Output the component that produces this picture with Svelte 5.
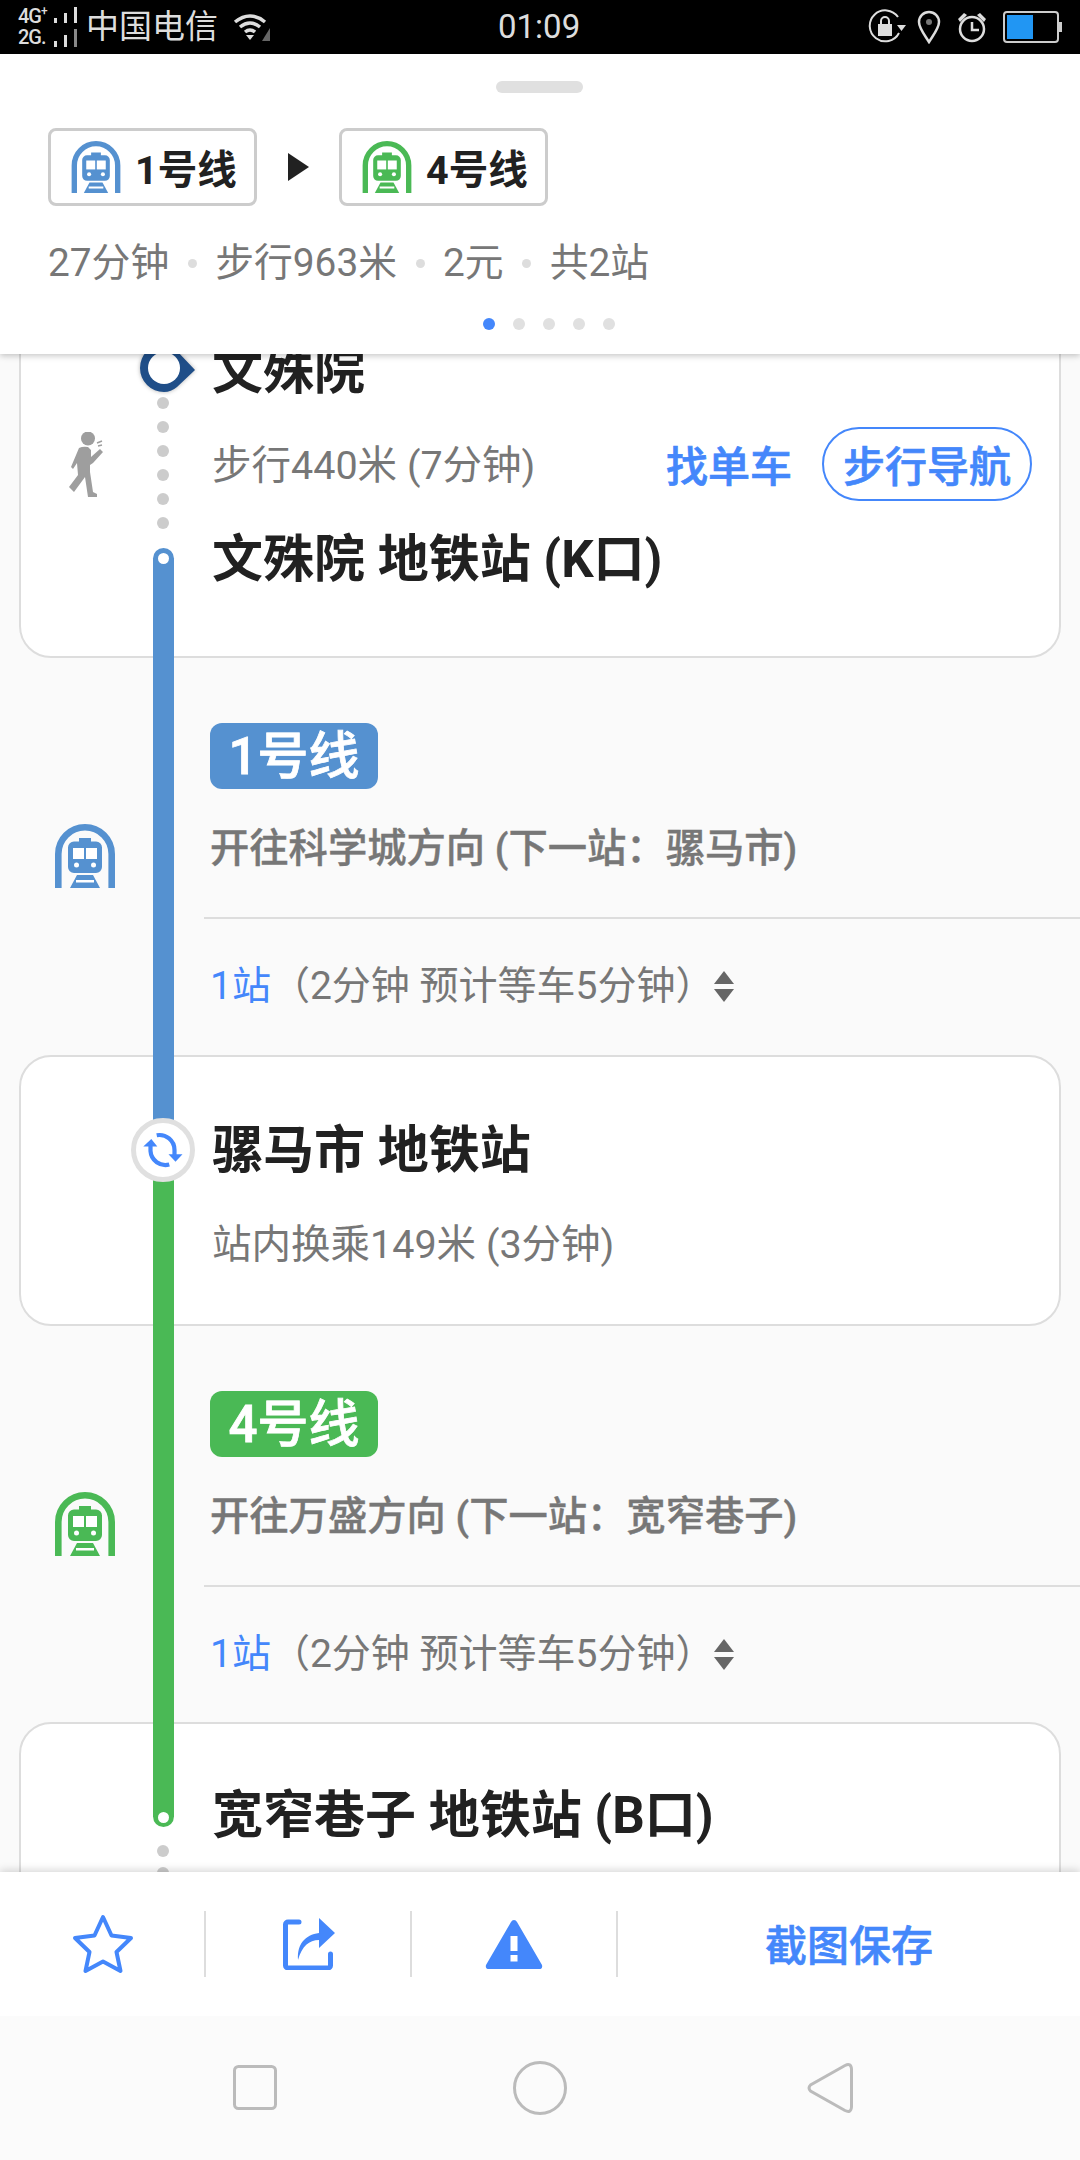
<script lang="ts">
	const metaItems = ['27分钟', '步行963米', '2元', '共2站'];
	const pageDots = [0, 1, 2, 3, 4];
	const blue = '#5591d0';
	const green = '#4ab955';
	const sections = [
		{ name: '1号线', color: blue, direction: '开往科学城方向 (下一站：骡马市)' },
		{ name: '4号线', color: green, direction: '开往万盛方向 (下一站：宽窄巷子)' }
	];
</script>

{#snippet train(color: string, cls: string)}
	<svg class={cls} viewBox="0 0 60 64">
		<path d="M3.3 64V30a26.7 26.7 0 0 1 53.4 0v34" fill="none" stroke={color} stroke-width="6.6" />
		<path
			d="M24 14h12v3.500h5a6 6 0 0 1 6 6V43a6 6 0 0 1-6 6H19a6 6 0 0 1-6-6V23.500a6 6 0 0 1 6-6h5z"
			fill={color}
		/>
		<rect x="18" y="24" width="11" height="11" fill="#fff" />
		<rect x="31" y="24" width="11" height="11" fill="#fff" />
		<circle cx="21.500" cy="41" r="2.500" fill="#fff" />
		<circle cx="38.500" cy="41" r="2.500" fill="#fff" />
		<path d="M22 51h16l7 13H15z" fill={color} />
		<rect x="21" y="56" width="18" height="2.500" fill="#fff" />
	</svg>
{/snippet}

<div class="phone">
	<div class="status">
		<div class="status-left">
			<div class="net"><span>4G<sup>+</sup></span><span>2G.</span></div>
			<svg class="bars" viewBox="0 0 30 44">
				<rect x="0" y="13" width="3" height="5" fill="#ddd" />
				<rect x="10" y="8" width="3" height="10" fill="#ddd" />
				<rect x="20" y="2" width="3" height="16" fill="#ddd" />
				<rect x="0" y="36" width="3" height="6" fill="#ddd" />
				<rect x="10" y="30" width="3" height="12" fill="#ddd" />
				<rect x="20" y="24" width="3" height="18" fill="#888" />
			</svg>
			<span class="carrier">中国电信</span>
			<svg class="wifi" viewBox="0 0 42 30">
				<path d="M3 10q15-12 30 0M8 15q10-8 20 0M13 20q5-4 10 0" fill="none" stroke="#ddd" stroke-width="3.500" />
				<path d="M14 23h8l-4 5z" fill="#ddd" />
				<path d="M38 16v13h-8z" fill="#666" />
			</svg>
		</div>
		<span class="time">01:09</span>
		<div class="status-right">
			<svg class="st-lock" viewBox="0 0 38 36">
				<path d="M31 24A15.500 15.500 0 1 1 30 8" fill="none" stroke="#ddd" stroke-width="2" />
				<path d="M29 16h9l-4.500 6z" fill="#ddd" />
				<rect x="10" y="15" width="14" height="12" fill="#ddd" />
				<path d="M13 15v-3a4 4 0 0 1 8 0v3" fill="none" stroke="#ddd" stroke-width="2" />
			</svg>
			<svg class="st-pin" viewBox="0 0 24 34">
				<path d="M12 32C7 24 2 18 2 12a10 10 0 0 1 20 0c0 6-5 12-10 20z" fill="none" stroke="#ddd" stroke-width="2.500" />
				<circle cx="12" cy="12" r="3" fill="#777" />
			</svg>
			<svg class="st-alarm" viewBox="0 0 30 32">
				<circle cx="15" cy="18" r="12" fill="none" stroke="#ddd" stroke-width="2.500" />
				<path d="M15 11v8h7" fill="none" stroke="#ddd" stroke-width="2.500" />
				<path d="M1 8l6-6 3 2-7 7zM29 8l-6-6-3 2 7 7z" fill="#ddd" />
			</svg>
			<div class="battery"><div class="battery-fill"></div></div>
			<div class="battery-tip"></div>
		</div>
	</div>

	<div class="top-panel">
		<div class="handle"></div>
		<div class="route">
			<div class="chip">
				{@render train(blue, 'chip-icon')}
				<span>1号线</span>
			</div>
			<div class="route-arrow"></div>
			<div class="chip">
				{@render train(green, 'chip-icon')}
				<span>4号线</span>
			</div>
		</div>
		<div class="meta">
			{#each metaItems as item, i}
				{#if i > 0}<i class="meta-dot"></i>{/if}
				<span>{item}</span>
			{/each}
		</div>
		<div class="pager">
			{#each pageDots as d}
				<i class="pager-dot" class:active={d === 0}></i>
			{/each}
		</div>
	</div>

	<div class="scroll">
		<div class="card card-first">
			<div class="title">文殊院</div>
			<div class="walk-row">
				<span class="sub">步行440米 (7分钟)</span>
				<div class="actions">
					<span class="bike">找单车</span>
					<span class="nav-pill">步行导航</span>
				</div>
			</div>
			<div class="title title-end">文殊院 地铁站 (K口)</div>
		</div>

		{#each sections as s, i}
			<div class="section">
				<div class="section-icon">
					{@render train(s.color, 'section-train')}
				</div>
				<div class="section-body">
					<div class="line-badge" style:background={s.color}>{s.name}</div>
					<div class="direction">{s.direction}</div>
					<div class="divider"></div>
					<div class="stops">
						<span class="stops-count">1站</span><span class="stops-info">（2分钟 预计等车5分钟）</span>
						<span class="sort"><i class="sort-up"></i><i class="sort-down"></i></span>
					</div>
				</div>
			</div>
			{#if i === 0}
				<div class="card card-transfer">
					<div class="title">骡马市 地铁站</div>
					<div class="sub transfer-sub">站内换乘149米 (3分钟)</div>
				</div>
			{/if}
		{/each}

		<div class="card card-last">
			<div class="title">宽窄巷子 地铁站 (B口)</div>
		</div>

		<!-- route rail sits over the cards -->
		<div class="dots dots-walk">
			{#each [0, 1, 2, 3, 4, 5] as d}<i data-d={d}></i>{/each}
		</div>
		<div class="dots dots-end">
			{#each [0, 1] as d}<i data-d={d}></i>{/each}
		</div>
		<div class="rail rail-blue"><i></i></div>
		<div class="rail rail-green"><i></i></div>

		<svg class="start-node" viewBox="0 0 60 60">
			<path d="M25 1A24 24 0 1 0 25 49Q32 49 38 44L56 27L38 8Q32 1 25 1Z" fill="#1f4e88" />
			<circle cx="25" cy="25" r="16" fill="#fff" />
		</svg>

		<div class="transfer-node">
			<svg viewBox="0 0 44 44">
				<path d="M15.700 7.300A15 15 0 0 1 33.500 22v5" fill="none" stroke="#4487fb" stroke-width="4.200" />
				<path d="M27.500 26.300h14l-7 7.500z" fill="#4487fb" />
				<path d="M28.300 36.500A15 15 0 0 1 9.500 23v-5" fill="none" stroke="#4487fb" stroke-width="4.200" />
				<path d="M2.300 18.600h14l-6-7.500z" fill="#4487fb" />
			</svg>
		</div>

		<svg class="walker" viewBox="0 0 36 66">
			<circle cx="20" cy="6.500" r="7" fill="#9e9e9e" />
			<path
				d="M11 16q4-2 9-1l3 3v7l9-8 3 3-10 11-3 2v7l3 20 4 2v3h-9l-3-20-11 15-5-5 9-12-1-12-4 6-2-2z"
				fill="#9e9e9e"
			/>
			<path d="M29 11l5-2M30 14l4-1" stroke="#9e9e9e" stroke-width="1.500" />
		</svg>
	</div>

	<div class="toolbar">
		<div class="tool tool-icon">
			<svg class="ic-star" viewBox="0 0 62 60">
				<path
					d="M31 3l8.500 18.500 19.500 2.500-14.500 14 4 19-17.500-9.500-17.500 9.500 4-19L3 24l19.500-2.500z"
					fill="none"
					stroke="#4487fb"
					stroke-width="4"
					stroke-linejoin="round"
				/>
			</svg>
		</div>
		<div class="tool tool-icon">
			<svg class="ic-share" viewBox="0 0 52 52">
				<path d="M16 4H5a2.500 2.500 0 0 0-2.500 2.500v41A2.500 2.500 0 0 0 5 50h40a2.500 2.500 0 0 0 2.500-2.500V36" fill="none" stroke="#4487fb" stroke-width="5" stroke-linecap="round" />
				<path d="M15 42C14 26 22 17 36 15V0l16 15-16 15V22C26 22 19 28 15 42z" fill="#4487fb" />
			</svg>
		</div>
		<div class="tool tool-icon">
			<svg class="ic-warn" viewBox="0 0 58 50">
				<path d="M29 1q2 0 3 2l25 43q1 4-3 4H4q-4 0-3-4L26 3q1-2 3-2z" fill="#4487fb" />
				<rect x="25.500" y="17" width="7" height="15" fill="#fff" />
				<rect x="25.500" y="36" width="7" height="6.500" fill="#fff" />
			</svg>
		</div>
		<div class="tool save">截图保存</div>
	</div>

	<div class="navbar">
		<svg class="nav-square" viewBox="0 0 44 45">
			<rect x="1.500" y="1.500" width="41" height="42" rx="4" fill="none" stroke="#bbb" stroke-width="3" />
		</svg>
		<svg class="nav-circle" viewBox="0 0 54 54">
			<circle cx="27" cy="27" r="25.500" fill="none" stroke="#bbb" stroke-width="3" />
		</svg>
		<svg class="nav-back" viewBox="0 0 46 52">
			<path d="M38 3.500Q44 .5 44.500 7v38q-.5 6.500-6.500 3.500L3.500 29q-3-3 0-6z" fill="none" stroke="#bbb" stroke-width="3" />
		</svg>
	</div>
</div>

<style>
	:global(body) {
		margin: 0;
		background: #fafafa;
	}

	.phone {
		width: 1080px;
		height: 2160px;
		display: flex;
		flex-direction: column;
		overflow: hidden;
		font-family: Roboto, 'Noto Sans CJK SC', sans-serif;
		background: #fafafa;
	}

	.phone i {
		display: block;
	}

	/* status bar */
	.status {
		height: 54px;
		flex: none;
		background: #000;
		color: #ddd;
		position: relative;
		display: flex;
		align-items: center;
		justify-content: space-between;
		padding: 0 18px;
		box-sizing: border-box;
	}

	.status-left,
	.status-right {
		display: flex;
		align-items: center;
	}

	.net {
		display: flex;
		flex-direction: column;
		font-size: 20px;
		line-height: 21px;
		width: 36px;
		white-space: nowrap;
		font-weight: 500;
		letter-spacing: -1px;
	}

	.net sup {
		font-size: 12px;
		line-height: 0;
	}

	.bars {
		width: 30px;
		height: 44px;
		margin-left: 0;
	}

	.carrier {
		font-size: 33px;
		margin-left: 2px;
		line-height: 54px;
	}

	.wifi {
		width: 42px;
		height: 30px;
		margin-left: 14px;
	}

	.time {
		position: absolute;
		left: 498px;
		font-size: 33px;
		line-height: 54px;
	}

	.st-lock {
		width: 38px;
		height: 36px;
	}

	.st-pin {
		width: 24px;
		height: 34px;
		margin-left: 11px;
	}

	.st-alarm {
		width: 30px;
		height: 32px;
		margin-left: 16px;
	}

	.battery {
		width: 56px;
		height: 32px;
		margin-left: 16px;
		border: 2px solid #ccc;
		border-radius: 4px;
		box-sizing: border-box;
		padding: 2px;
	}

	.battery-fill {
		width: 26px;
		height: 100%;
		background: #2196f3;
	}

	.battery-tip {
		width: 3px;
		height: 10px;
		background: #ccc;
	}

	/* route summary */
	.top-panel {
		height: 300px;
		flex: none;
		background: #fff;
		position: relative;
		z-index: 2;
		box-shadow: 0 2px 6px rgba(0, 0, 0, 0.22);
		box-sizing: border-box;
		padding: 27px 48px 0;
	}

	.handle {
		width: 87px;
		height: 12px;
		border-radius: 6px;
		background: #e0e0e0;
		margin-left: 448px;
	}

	.route {
		display: flex;
		align-items: center;
		margin-top: 35px;
	}

	.chip {
		width: 209px;
		height: 78px;
		box-sizing: border-box;
		border: 3px solid #ccc;
		border-radius: 8px;
		display: flex;
		align-items: center;
		padding-left: 19px;
		font-size: 39.500px;
		font-weight: 700;
		color: #212121;
	}

	.chip span {
		margin-left: 13px;
		margin-bottom: 2px;
	}

	:global(.chip-icon) {
		width: 52px;
		height: 52px;
	}

	.route-arrow {
		width: 0;
		height: 0;
		margin: 0 30px 0 31px;
		border-left: 21px solid #212121;
		border-top: 14px solid transparent;
		border-bottom: 14px solid transparent;
	}

	.meta {
		display: flex;
		align-items: center;
		margin-top: 32px;
		font-size: 38.800px;
		line-height: 50px;
		color: #777;
		height: 50px;
	}

	.meta-dot {
		width: 9px;
		height: 9px;
		border-radius: 50%;
		background: #ddd;
		margin: 0 18.500px 0 18.500px;
	}

	.pager {
		display: flex;
		gap: 18px;
		margin: 30px 0 0 435px;
	}

	.pager-dot {
		width: 12px;
		height: 12px;
		border-radius: 50%;
		background: #e0e0e0;
	}

	.pager-dot.active {
		background: #4487fb;
	}

	/* timeline */
	.scroll {
		flex: 1;
		min-height: 0;
		position: relative;
		overflow: hidden;
		z-index: 0;
	}

	.card {
		margin: 0 19px;
		background: #fff;
		border: 2px solid #ddd;
		border-radius: 32px;
		padding-left: 191px;
	}

	.card-first {
		margin-top: -54px;
		padding-top: 40px;
		padding-bottom: 66px;
		margin-bottom: -1px;
	}

	.card-transfer {
		padding-top: 64px;
		padding-bottom: 54px;
		margin-bottom: -1px;
	}

	.card-last {
		margin-top: -1px;
		padding-top: 62px;
		height: 300px;
	}

	.title {
		font-size: 51px;
		line-height: 60px;
		font-weight: 700;
		color: #212121;
		white-space: nowrap;
	}

	.title-end {
		margin-top: 29px;
	}

	.sub {
		font-size: 39.500px;
		line-height: 50px;
		color: #777;
	}

	.transfer-sub {
		margin-top: 39px;
	}

	.walk-row {
		display: flex;
		align-items: center;
		justify-content: space-between;
		margin-top: 25px;
		padding-right: 27px;
	}

	.walk-row .sub {
		padding-top: 3px;
	}

	.actions {
		display: flex;
		align-items: center;
		font-size: 42px;
		font-weight: 500;
		color: #4487fb;
		-webkit-text-stroke: 0.7px #4487fb;
	}

	.bike {
		margin-bottom: 2px;
	}

	.nav-pill {
		width: 210px;
		height: 74px;
		box-sizing: border-box;
		margin-left: 30px;
		border: 2px solid #4487fb;
		border-radius: 37px;
		display: flex;
		align-items: center;
		justify-content: center;
		white-space: nowrap;
		padding-bottom: 2px;
	}

	.section {
		display: flex;
		height: 398px;
	}

	.section-icon {
		width: 204px;
		flex: none;
		display: flex;
		align-items: center;
		padding-left: 55px;
		box-sizing: border-box;
	}

	:global(.section-train) {
		width: 60px;
		height: 64px;
	}

	.section-body {
		flex: 1;
		padding-top: 66px;
	}

	.line-badge {
		width: 168px;
		height: 66px;
		margin-left: 6px;
		border-radius: 12px;
		color: #fff;
		font-size: 51px;
		line-height: 68px;
		font-weight: 500;
		text-align: center;
		-webkit-text-stroke: 0.8px #fff;
	}

	.direction {
		margin-top: 35px;
		padding-left: 6px;
		font-size: 39.300px;
		line-height: 50px;
		font-weight: 500;
		color: #777;
		white-space: nowrap;
		-webkit-text-stroke: 0.4px #777;
	}

	.divider {
		height: 2px;
		background: #ddd;
		margin-top: 43px;
	}

	.stops {
		margin-top: 42px;
		padding-left: 6px;
		font-size: 39px;
		line-height: 50px;
		display: flex;
		align-items: center;
	}

	.stops-count {
		color: #4487fb;
	}

	.stops-info {
		color: #777;
	}

	.sort {
		margin-left: 0;
		display: flex;
		flex-direction: column;
		gap: 5px;
	}

	.sort-up,
	.sort-down {
		width: 0;
		height: 0;
		border-left: 10px solid transparent;
		border-right: 10px solid transparent;
	}

	.sort-up {
		border-bottom: 13px solid #666;
	}

	.sort-down {
		border-top: 13px solid #666;
	}

	.dots {
		position: absolute;
		left: 157px;
		display: flex;
		flex-direction: column;
	}

	.dots i {
		width: 12px;
		height: 12px;
		border-radius: 50%;
		background: #ccc;
	}

	.dots-walk {
		top: 43px;
		gap: 12px;
	}

	.dots-end {
		top: 1491px;
		gap: 10px;
	}

	.rail {
		position: absolute;
		left: 153px;
		width: 21px;
	}

	.rail i {
		width: 11px;
		height: 11px;
		border-radius: 50%;
		background: #fff;
		position: absolute;
		left: 5px;
	}

	.rail-blue {
		top: 194px;
		height: 602px;
		background: #5591d0;
		border-radius: 11px 11px 0 0;
	}

	.rail-blue i {
		top: 5px;
	}

	.rail-green {
		top: 796px;
		height: 677px;
		background: #4ab955;
		border-radius: 0 0 11px 11px;
	}

	.rail-green i {
		bottom: 4px;
	}

	.start-node {
		position: absolute;
		left: 139px;
		top: -11px;
		width: 60px;
		height: 60px;
		filter: drop-shadow(0 0 2px rgba(0, 0, 0, 0.3));
	}

	.transfer-node {
		position: absolute;
		left: 131px;
		top: 764px;
		width: 64px;
		height: 64px;
		box-sizing: border-box;
		border: 5px solid #e0e0e0;
		border-radius: 50%;
		background: #fff;
		display: flex;
		align-items: center;
		justify-content: center;
	}

	.transfer-node svg {
		width: 44px;
		height: 44px;
	}

	.walker {
		position: absolute;
		left: 68px;
		top: 78px;
		width: 36px;
		height: 66px;
	}

	/* bottom actions */
	.toolbar {
		height: 144px;
		flex: none;
		background: #fff;
		position: relative;
		z-index: 2;
		box-shadow: 0 -2px 8px rgba(0, 0, 0, 0.16);
		display: flex;
		align-items: center;
	}

	.tool {
		display: flex;
		align-items: center;
		justify-content: center;
		height: 66px;
	}

	.tool-icon {
		width: 206px;
		box-sizing: border-box;
		border-right: 2px solid #ddd;
	}

	.save {
		flex: 1;
		font-size: 42px;
		font-weight: 500;
		color: #4487fb;
		-webkit-text-stroke: 0.6px #4487fb;
		padding-bottom: 3px;
		box-sizing: border-box;
	}

	.ic-star {
		width: 62px;
		height: 60px;
		margin-left: 2px;
	}

	.ic-share {
		width: 52px;
		height: 52px;
		margin-left: 2px;
	}

	.ic-warn {
		width: 58px;
		height: 50px;
	}

	.navbar {
		height: 144px;
		flex: none;
		background: #fbfbfb;
		position: relative;
		z-index: 3;
	}

	.navbar svg {
		position: absolute;
	}

	.nav-square {
		left: 233px;
		top: 49px;
		width: 44px;
		height: 45px;
	}

	.nav-circle {
		left: 513px;
		top: 45px;
		width: 54px;
		height: 54px;
	}

	.nav-back {
		left: 807px;
		top: 46px;
		width: 46px;
		height: 52px;
	}
</style>
